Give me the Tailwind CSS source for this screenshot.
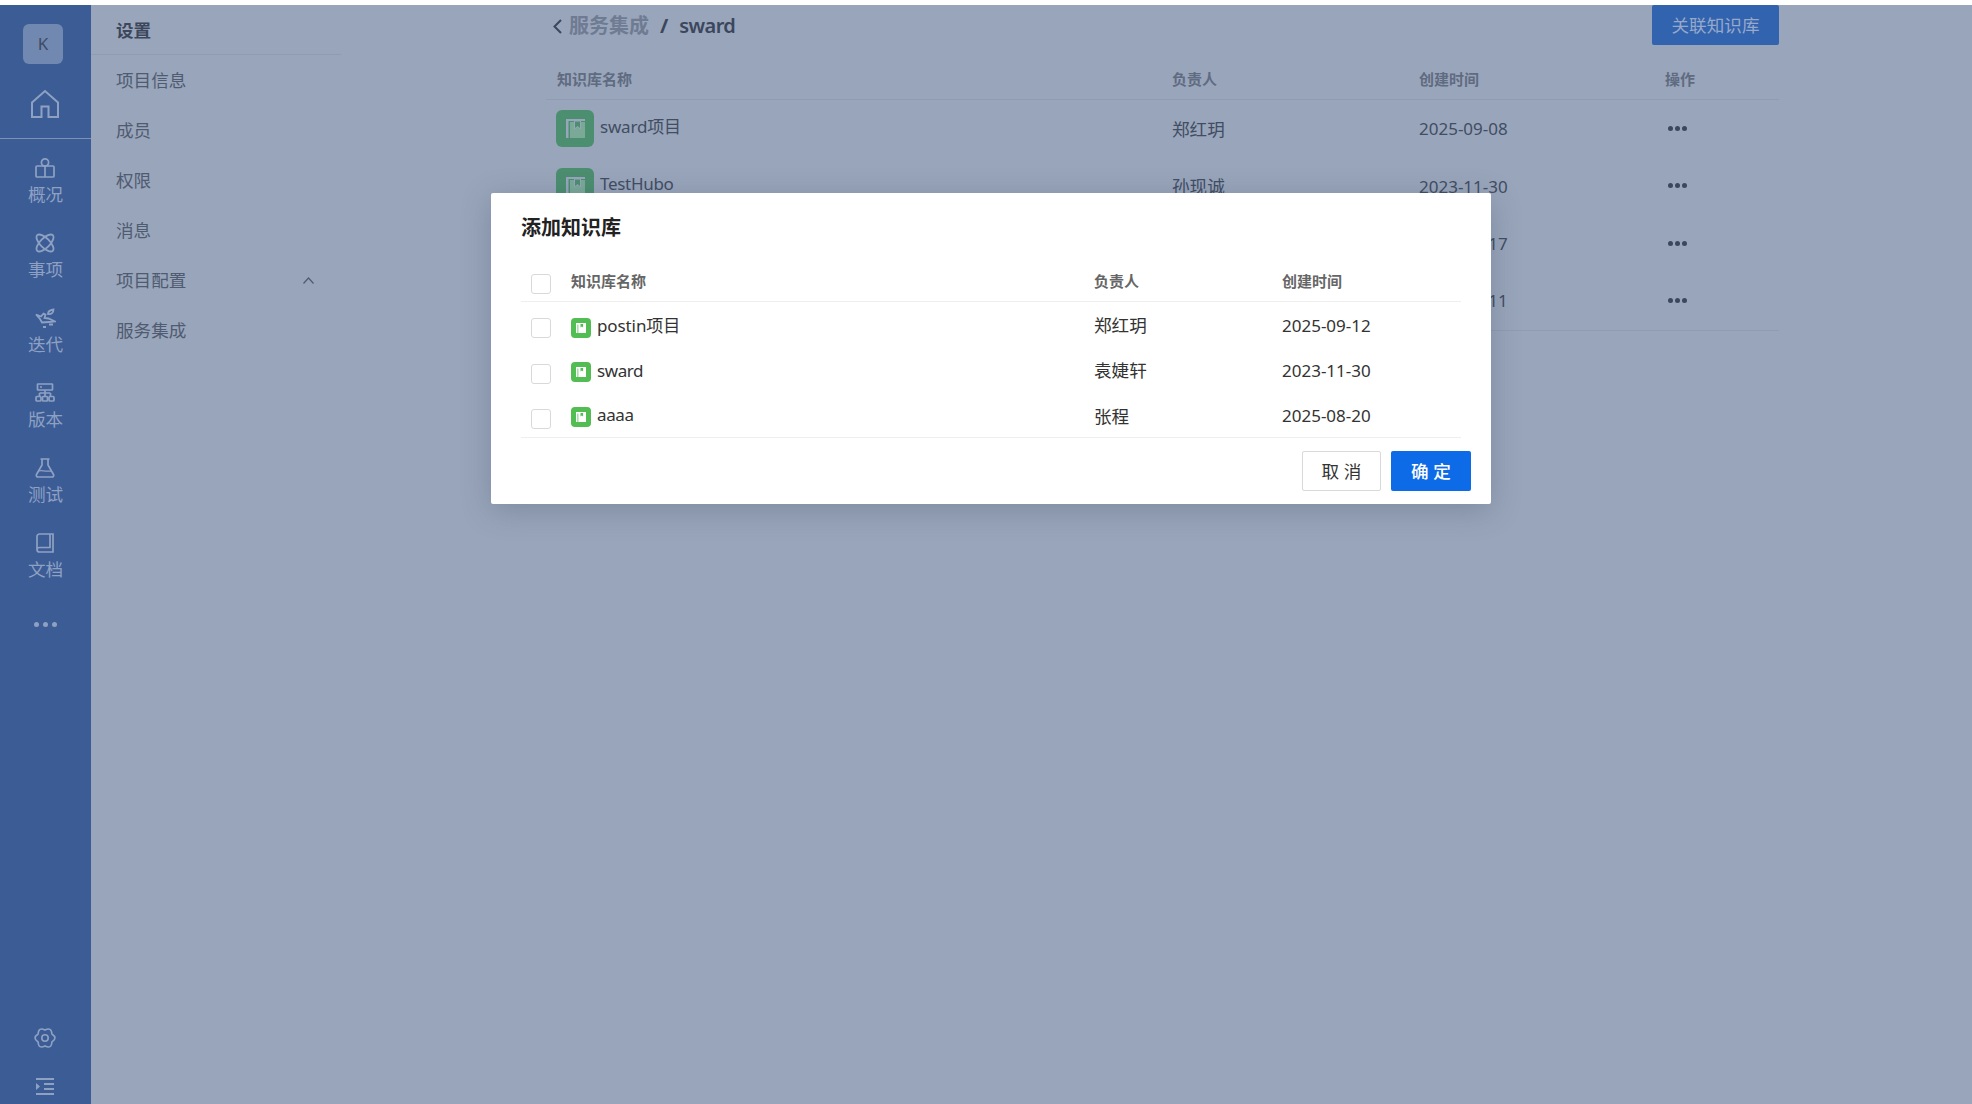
<!DOCTYPE html>
<html lang="zh-CN">
<head>
    <meta charset="UTF-8">
    <meta name="viewport" content="width=device-width, initial-scale=1.0">
    <title>服务集成 / sward</title>
    <script src="https://cdn.jsdelivr.net/npm/@tailwindcss/browser@4"></script>
</head>
<body class="bg-white h-screen overflow-hidden pt-[5px] font-['Noto_Sans','Noto_Sans_CJK_SC',sans-serif]">
    <div class="relative flex h-full bg-[#99a5ba]">

        <!-- left nav -->
        <aside class="w-[91px] shrink-0 h-full bg-[#3c5c96] flex flex-col items-center text-[#8fa1c3] text-[17.6px] leading-[24px]">
            <div class="mt-[19px] w-[40px] h-[40px] -ml-[5px] rounded-[6px] bg-[#7188b1] flex items-center justify-center text-[#3f4b63] text-[17px]">K</div>
            <svg class="mt-[25px] -ml-[1px]" width="30" height="30" viewBox="0 0 30 30" fill="none" stroke="#8fa1c3" stroke-width="2"><path d="M2 13.500 15 2l13 11.500V28H18.500V17.500h-7V28H2z"/></svg>
            <div class="w-full h-px mt-[19px] bg-[#7d91b7]"></div>

            <div class="mt-[19px] flex flex-col items-center h-[75px]">
                <svg width="20" height="20" viewBox="0 0 20 20" fill="none" stroke="#8fa1c3" stroke-width="1.700"><rect x="1" y="8" width="18" height="11" rx="1"/><path d="M10 8v11"/><circle cx="10" cy="4.500" r="3.600"/></svg>
                <span class="mt-[4px]">概况</span>
            </div>
            <div class="flex flex-col items-center h-[75px]">
                <svg width="20" height="20" viewBox="0 0 20 20" fill="none" stroke="#8fa1c3" stroke-width="1.800"><ellipse cx="10" cy="10" rx="11" ry="4.800" transform="rotate(45 10 10)"/><ellipse cx="10" cy="10" rx="11" ry="4.800" transform="rotate(-45 10 10)"/></svg>
                <span class="mt-[4px]">事项</span>
            </div>
            <div class="flex flex-col items-center h-[75px]">
                <svg width="21" height="20" viewBox="0 0 21 20" fill="none" stroke="#8fa1c3" stroke-width="1.800"><path d="M1 6.500 6 8.500l2.500-3 2 1-1 3.500 4 .500 6.500 3-6 .500-7 .500L5 11z"/><path d="M13 6c0-2.500 2-4 5.500-4.500 0 3-2 5-5.500 4.500zM8 19h3M14 16.500h4"/></svg>
                <span class="mt-[4px]">迭代</span>
            </div>
            <div class="flex flex-col items-center h-[75px]">
                <svg width="20" height="20" viewBox="0 0 20 20" fill="none" stroke="#8fa1c3" stroke-width="1.700"><rect x="2.500" y="1" width="15" height="6" rx=".5"/><path d="M5 4h2M10 7v6M4.500 10h11M4.500 10v3M15.500 10v3"/><rect x="1" y="13.500" width="5" height="4.500" rx="1"/><rect x="7.500" y="13.500" width="5" height="4.500" rx="1"/><rect x="14" y="13.500" width="5" height="4.500" rx="1"/></svg>
                <span class="mt-[4px]">版本</span>
            </div>
            <div class="flex flex-col items-center h-[75px]">
                <svg width="20" height="20" viewBox="0 0 20 20" fill="none" stroke="#8fa1c3" stroke-width="1.700"><path d="M5.500 1h9M7 1v6L1.500 16.500c-.6 1.200.2 2.500 1.500 2.500h14c1.300 0 2.100-1.300 1.500-2.500L13 7V1"/><path d="M4 13c3-1.500 5 1 12 0" stroke-width="1.300"/></svg>
                <span class="mt-[4px]">测试</span>
            </div>
            <div class="flex flex-col items-center h-[75px]">
                <svg width="20" height="20" viewBox="0 0 20 20" fill="none" stroke="#8fa1c3" stroke-width="1.700"><path d="M18 1H4.500A2.500 2.500 0 0 0 2 3.500v13A2.500 2.500 0 0 0 4.500 19H18zM15 1v13.500H4.500A2.500 2.500 0 0 0 2 16.500"/></svg>
                <span class="mt-[4px]">文档</span>
            </div>
            <div class="mt-[14px] flex gap-[4px]">
                <i class="block w-[5px] h-[5px] rounded-full bg-[#8fa1c3]"></i>
                <i class="block w-[5px] h-[5px] rounded-full bg-[#8fa1c3]"></i>
                <i class="block w-[5px] h-[5px] rounded-full bg-[#8fa1c3]"></i>
            </div>

            <svg class="mt-auto -ml-[2px]" width="22" height="22" viewBox="0 0 22 22" fill="none" stroke="#8fa1c3" stroke-width="1.600"><path d="M11 3Q17.500-.26 17.930 7 24 11 17.930 15 17.500 22.260 11 19 4.500 22.260 4.070 15-2 11 4.070 7 4.500-.26 11 3z"/><circle cx="11" cy="11" r="3.200"/></svg>
            <svg class="mt-[29px] mb-[9px] -ml-[2px]" width="18" height="17" viewBox="0 0 18 17" fill="#8fa1c3"><path d="M0 0h18v2H0zM8 5h10v2H8zM8 10h10v2H8zM0 15h18v2H0zM0 5l4 3.500L0 12z"/></svg>
        </aside>

        <!-- settings menu -->
        <nav class="w-[250px] shrink-0 text-[17.6px] text-[#4f5b71] leading-[24px]">
            <div class="h-[50px] flex items-center pl-[25px] font-bold text-[#3c475c] border-b border-[#909cb2]">设置</div>
            <ul>
                <li class="h-[50px] flex items-center pl-[25px]">项目信息</li>
                <li class="h-[50px] flex items-center pl-[25px]">成员</li>
                <li class="h-[50px] flex items-center pl-[25px]">权限</li>
                <li class="h-[50px] flex items-center pl-[25px]">消息</li>
                <li class="h-[50px] flex items-center pl-[25px] pr-[27px] justify-between">
                    项目配置
                    <svg width="11" height="7" viewBox="0 0 11 7" fill="none" stroke="#4f5b71" stroke-width="1.200"><path d="M.5 6.500 5.500 1l5 5.500"/></svg>
                </li>
                <li class="h-[50px] flex items-center pl-[25px]">服务集成</li>
            </ul>
        </nav>

        <!-- knowledge base list -->
        <main class="ml-[205px] w-[1233px]">
            <div class="h-[54px] flex items-start justify-between">
                <div class="flex items-center h-[42px] pl-[7px] text-[20px] font-bold">
                    <svg class="mr-[7px]" width="9" height="15" viewBox="0 0 9 15" fill="none" stroke="#3b475d" stroke-width="2"><path d="M8 1 1.500 7.500 8 14"/></svg>
                    <span class="text-[#6f7b92]">服务集成</span>
                    <span class="mx-[11px] text-[#3b475d]">/</span>
                    <span class="text-[#3b475d] font-semibold tracking-[-0.6px]">sward</span>
                </div>
                <div class="w-[127px] h-[40px] rounded-[2px] bg-[#3263ae] text-[#97a9cb] text-[17.6px] flex items-center justify-center">关联知识库</div>
            </div>

            <div class="grid grid-cols-[626px_247px_246px_114px] h-[41px] items-center text-[15px] font-semibold text-[#5f6b81] border-b border-[#909cb2]">
                <div class="pl-[11px]">知识库名称</div>
                <div>负责人</div>
                <div>创建时间</div>
                <div>操作</div>
            </div>
            <div class="grid grid-cols-[626px_247px_246px_114px] h-[57.500px] items-center text-[17px] text-[#414d63]">
                <div class="pl-[10px] flex items-center gap-[6px]">
                    <span class="w-[38px] h-[37px] rounded-[6px] bg-[#4c8e70] flex items-center justify-center">
                        <svg width="19" height="19" viewBox="0 0 19 19"><path d="M4 3h15v16H4z" fill="#7aa998"/><path d="M0 0h19v2H0zM0 2h2.500v17H0z" fill="#99a5bb"/><path d="M8.500 2h6v8l-3-2.500-3 2.500z" fill="#4c8e70" stroke="#99a5bb"/></svg>
                    </span>
                    <span class="-mt-[4px] tracking-[-0.2px]">sward项目</span>
                </div>
                <div class="text-[17.6px]">郑红玥</div>
                <div>2025-09-08</div>
                <div class="pl-[3px] flex gap-[2px] -mt-[1px]"><i class="block w-[5px] h-[5px] rounded-full bg-[#3b475d]"></i><i class="block w-[5px] h-[5px] rounded-full bg-[#3b475d]"></i><i class="block w-[5px] h-[5px] rounded-full bg-[#3b475d]"></i></div>
            </div>
            <div class="grid grid-cols-[626px_247px_246px_114px] h-[57.500px] items-center text-[17px] text-[#414d63]">
                <div class="pl-[10px] flex items-center gap-[6px]">
                    <span class="w-[38px] h-[37px] rounded-[6px] bg-[#4c8e70] flex items-center justify-center">
                        <svg width="19" height="19" viewBox="0 0 19 19"><path d="M4 3h15v16H4z" fill="#7aa998"/><path d="M0 0h19v2H0zM0 2h2.500v17H0z" fill="#99a5bb"/><path d="M8.500 2h6v8l-3-2.500-3 2.500z" fill="#4c8e70" stroke="#99a5bb"/></svg>
                    </span>
                    <span class="-mt-[5px] tracking-[-0.3px]">TestHubo</span>
                </div>
                <div class="text-[17.6px]">孙现诚</div>
                <div>2023-11-30</div>
                <div class="pl-[3px] flex gap-[2px] -mt-[1px]"><i class="block w-[5px] h-[5px] rounded-full bg-[#3b475d]"></i><i class="block w-[5px] h-[5px] rounded-full bg-[#3b475d]"></i><i class="block w-[5px] h-[5px] rounded-full bg-[#3b475d]"></i></div>
            </div>
            <div class="grid grid-cols-[626px_247px_246px_114px] h-[57.500px] items-center text-[17px] text-[#414d63]">
                <div></div>
                <div></div>
                <div>2023-11-17</div>
                <div class="pl-[3px] flex gap-[2px] -mt-[1px]"><i class="block w-[5px] h-[5px] rounded-full bg-[#3b475d]"></i><i class="block w-[5px] h-[5px] rounded-full bg-[#3b475d]"></i><i class="block w-[5px] h-[5px] rounded-full bg-[#3b475d]"></i></div>
            </div>
            <div class="grid grid-cols-[626px_247px_246px_114px] h-[58px] items-center text-[17px] text-[#414d63] border-b border-[#909cb2]">
                <div></div>
                <div></div>
                <div>2023-11-11</div>
                <div class="pl-[3px] flex gap-[2px] -mt-[1px]"><i class="block w-[5px] h-[5px] rounded-full bg-[#3b475d]"></i><i class="block w-[5px] h-[5px] rounded-full bg-[#3b475d]"></i><i class="block w-[5px] h-[5px] rounded-full bg-[#3b475d]"></i></div>
            </div>
        </main>

        <!-- dialog -->
        <div class="absolute left-[491px] top-[188px] w-[1000px] h-[311px] bg-white rounded-[2px] shadow-[0_6px_30px_rgba(40,55,85,0.25)] px-[30px] text-[#333]">
            <h2 class="h-[69px] pt-[21px] text-[20px] leading-[28px] font-bold text-[#222]">添加知识库</h2>
            <div class="grid grid-cols-[50px_523px_188px_1fr] h-[40px] items-center text-[15px] font-semibold text-[#666] border-b border-[#eee]">
                <span class="ml-[10px] mt-[5px] w-[20px] h-[20px] rounded-[3px] border border-[#d9d9d9]"></span>
                <div class="-mt-[1px]">知识库名称</div>
                <div class="-mt-[1px]">负责人</div>
                <div class="-mt-[1px]">创建时间</div>
            </div>
            <div class="grid grid-cols-[50px_523px_188px_1fr] h-[45.500px] items-center text-[17px]">
                <span class="ml-[10px] mt-[6px] w-[20px] h-[20px] rounded-[3px] border border-[#d9d9d9]"></span>
                <div class="flex items-center gap-[6px]">
                    <span class="mt-[6px] w-[20px] h-[20px] rounded-[4px] bg-[#52bd52] flex items-center justify-center"><svg width="10" height="10" viewBox="0 0 10 10"><path d="M0 0h10v10H0z" fill="#fff"/><path d="M1.500 1.500h.8v8.500h-.8zM4.500 1v3.500l1.300-1 1.300 1V1z" fill="#52bd52"/></svg></span>
                    <span class="mt-[1px] tracking-[-0.1px]">postin项目</span>
                </div>
                <div class="mt-[1px] text-[17.6px]">郑红玥</div>
                <div class="mt-[1px]">2025-09-12</div>
            </div>
            <div class="grid grid-cols-[50px_523px_188px_1fr] h-[45.500px] items-center text-[17px]">
                <span class="ml-[10px] mt-[8px] w-[20px] h-[20px] rounded-[3px] border border-[#d9d9d9]"></span>
                <div class="flex items-center gap-[6px]">
                    <span class="mt-[4px] w-[20px] h-[20px] rounded-[4px] bg-[#52bd52] flex items-center justify-center"><svg width="10" height="10" viewBox="0 0 10 10"><path d="M0 0h10v10H0z" fill="#fff"/><path d="M1.500 1.500h.8v8.500h-.8zM4.500 1v3.500l1.300-1 1.300 1V1z" fill="#52bd52"/></svg></span>
                    <span class="tracking-[-0.4px]">sward</span>
                </div>
                <div class="text-[17.6px]">袁婕轩</div>
                <div>2023-11-30</div>
            </div>
            <div class="grid grid-cols-[50px_523px_188px_1fr] h-[45px] items-center text-[17px] border-b border-[#eee]">
                <span class="ml-[10px] mt-[7px] w-[20px] h-[20px] rounded-[3px] border border-[#d9d9d9]"></span>
                <div class="flex items-center gap-[6px]">
                    <span class="mt-[3px] w-[20px] h-[20px] rounded-[4px] bg-[#52bd52] flex items-center justify-center"><svg width="10" height="10" viewBox="0 0 10 10"><path d="M0 0h10v10H0z" fill="#fff"/><path d="M1.500 1.500h.8v8.500h-.8zM4.500 1v3.500l1.300-1 1.300 1V1z" fill="#52bd52"/></svg></span>
                    <span class="tracking-[-0.4px]">aaaa</span>
                </div>
                <div class="mt-[2px] text-[17.6px]">张程</div>
                <div class="mt-[2px]">2025-08-20</div>
            </div>
            <div class="flex justify-end gap-[10px] mt-[13px] -mr-[10px] text-[17.6px]">
                <button class="w-[79px] h-[40px] rounded-[2px] border border-[#d9d9d9] bg-white text-[#333]">取 消</button>
                <button class="w-[80px] h-[40px] rounded-[2px] bg-[#0d6be8] text-white font-medium">确 定</button>
            </div>
        </div>
    </div>
</body>
</html>
